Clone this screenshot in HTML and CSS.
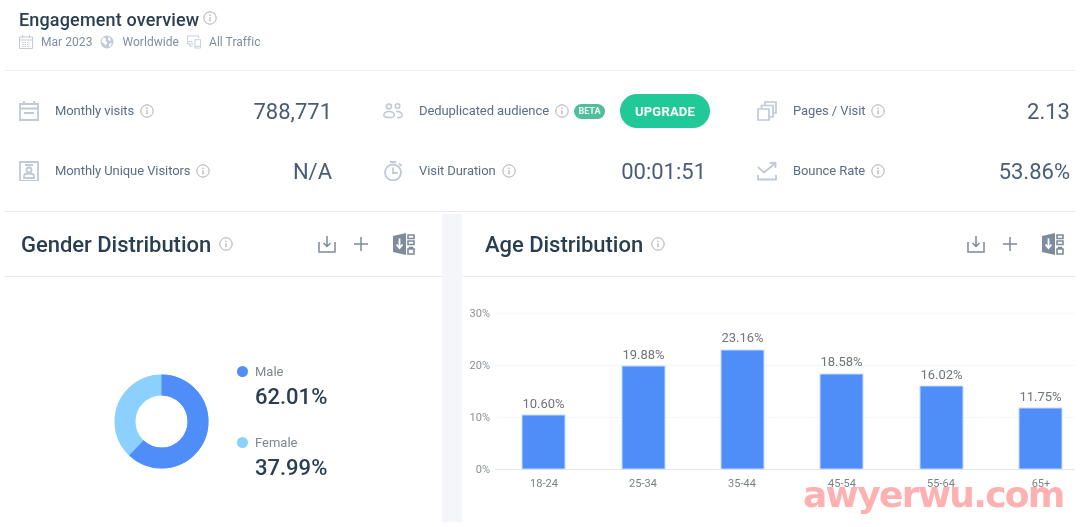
FILE: index.html
```html
<!DOCTYPE html>
<html lang="en">
<head>
    <meta charset="UTF-8">
    <title>Engagement overview</title>
    <link rel="stylesheet" href="styles.css">
</head>
<body>
    <svg class="defs" width="0" height="0">
        <symbol id="info" viewBox="0 0 14 14">
            <circle cx="7" cy="7" r="6.2" fill="none" stroke="currentColor" stroke-width="1"></circle>
            <path d="M7 6.2v4" stroke="currentColor" stroke-width="1.2" fill="none"></path>
            <circle cx="7" cy="4.2" r=".8" fill="currentColor"></circle>
        </symbol>
        <symbol id="download" viewBox="0 0 18 18">
            <path d="M1 7v10h16V7M9 1v10M5.500 8 9 11.500 12.500 8" fill="none" stroke="currentColor" stroke-width="1.500"></path>
        </symbol>
        <symbol id="plus" viewBox="0 0 14 14">
            <path d="M7 0v14M0 7h14" fill="none" stroke="currentColor" stroke-width="1.500"></path>
        </symbol>
        <symbol id="compare" viewBox="0 0 22 22">
            <path d="M0 3 13 0v22L0 19z" fill="currentColor"></path>
            <path d="M6.500 5.500v9M3.500 11.500l3 3.500 3-3.500" fill="none" stroke="#fff" stroke-width="1.800"></path>
            <path d="M15 2h6v3.500h-6zM15 8h6v3.500h-6z" fill="none" stroke="currentColor" stroke-width="1.600"></path>
            <path d="M15 16h6v5h-6zM16.500 16v-1.500h3V16" fill="none" stroke="currentColor" stroke-width="1.600"></path>
        </symbol>
    </svg>

    <div class="overview">
        <div class="title-row">
            <h1>Engagement overview</h1>
            <svg class="info info-title"><use href="#info"></use></svg>
        </div>
        <div class="filters">
            <svg class="filter-icon" viewBox="0 0 14 14" fill="none" stroke="currentColor">
                <path d="M.5 2h13v11.500H.5zM.5 5h13M3.500 0v3M10.500 0v3"></path>
                <path d="M3 7.500h8M3 9.500h8M3 11.500h8" stroke-dasharray="1.500 1"></path>
            </svg>
            <span class="filter-text">Mar 2023</span>
            <svg class="filter-icon" viewBox="0 0 14 14">
                <circle cx="7" cy="7" r="6.500" fill="currentColor"></circle>
                <path d="M3 2.500 6 3.500 5.500 6 7 7.500 6 10.500 3.500 8 1.500 7zM9 1.500 11 5 9.500 6 8 4zM9.500 8.500l2.500-.5-1.500 3.500-1.500.5z" fill="#fff"></path>
            </svg>
            <span class="filter-text">Worldwide</span>
            <svg class="filter-icon" viewBox="0 0 15 14" fill="none" stroke="currentColor">
                <path d="M7 9H.5V.5h12V3M.5 6.500H6M3 9v2.500h3"></path>
                <path d="M8.500 4.500h6v9h-6zM8.500 11.500h6"></path>
            </svg>
            <span class="filter-text">All Traffic</span>
        </div>
    </div>

    <div class="metrics">
        <div class="metric">
            <svg class="metric-icon" viewBox="0 0 20 20" fill="none" stroke="currentColor" stroke-width="1.800">
                <path d="M1 3h18v16H1zM1 7.500h18M5 0v3M15 0v3M5 12h10"></path>
            </svg>
            <span class="label">Monthly visits</span>
            <svg class="info"><use href="#info"></use></svg>
            <span class="value">788,771</span>
        </div>
        <div class="metric">
            <svg class="metric-icon" viewBox="0 0 20 20" fill="none" stroke="currentColor" stroke-width="1.800">
                <path d="M1 1h18v19H1zM6 4h8M5 17h10v-2c0-1.500-2-2.500-5-2.500S5 13.500 5 15z"></path>
                <circle cx="10" cy="9" r="2.500"></circle>
            </svg>
            <span class="label">Monthly Unique Visitors</span>
            <svg class="info"><use href="#info"></use></svg>
            <span class="value">N/A</span>
        </div>
        <div class="metric">
            <svg class="metric-icon" viewBox="0 0 22 18" fill="none" stroke="currentColor" stroke-width="1.700">
                <circle cx="6.500" cy="4" r="2.800"></circle>
                <circle cx="16" cy="3.500" r="2.500"></circle>
                <path d="M1 14c0-3 2.500-4.500 5.500-4.500s6 1.500 6 4.500-11.500 3-11.500 0zM14.500 9.500c3.500-.5 6.500 1.500 6.500 4 0 2-2.500 3-5.500 3"></path>
            </svg>
            <span class="label">Deduplicated audience</span>
            <svg class="info"><use href="#info"></use></svg>
            <span class="beta">BETA</span>
            <button class="upgrade">UPGRADE</button>
        </div>
        <div class="metric">
            <svg class="metric-icon" viewBox="0 0 20 20" fill="none" stroke="currentColor" stroke-width="1.800">
                <circle cx="10" cy="11.500" r="8"></circle>
                <path d="M10 6.500v5.500h4.500M7 1h6M16 2.500l2.500 2.500"></path>
            </svg>
            <span class="label">Visit Duration</span>
            <svg class="info"><use href="#info"></use></svg>
            <span class="value">00:01:51</span>
        </div>
        <div class="metric">
            <svg class="metric-icon" viewBox="0 0 20 20" fill="none" stroke="currentColor" stroke-width="1.700">
                <path d="M8 4V1h11v11h-3"></path>
                <path d="M4.500 8V4.500H16V16h-4"></path>
                <path d="M1 8h11v11H1z"></path>
            </svg>
            <span class="label">Pages / Visit</span>
            <svg class="info"><use href="#info"></use></svg>
            <span class="value">2.13</span>
        </div>
        <div class="metric">
            <svg class="metric-icon" viewBox="0 0 20 20" fill="none" stroke="currentColor" stroke-width="1.800">
                <path d="M1 6 7 11.500 18 2.500M13 2h5.500v5M1 14v4.500h18V14"></path>
            </svg>
            <span class="label">Bounce Rate</span>
            <svg class="info"><use href="#info"></use></svg>
            <span class="value">53.86%</span>
        </div>
    </div>

    <div class="panels">
        <div class="panel panel-gender">
            <div class="panel-header">
                <h2>Gender Distribution</h2>
                <svg class="info info-panel"><use href="#info"></use></svg>
                <div class="tools">
                    <svg class="tool-download"><use href="#download"></use></svg>
                    <svg class="tool-plus"><use href="#plus"></use></svg>
                    <svg class="tool-compare"><use href="#compare"></use></svg>
                </div>
            </div>
            <div class="gender-body">
                <svg class="donut" viewBox="0 0 95 95">
                    <circle cx="47.500" cy="47.500" r="36.500" fill="none" stroke="#8bd0ff" stroke-width="21"></circle>
                    <circle cx="47.500" cy="47.500" r="36.500" fill="none" stroke="#4f8df9" stroke-width="21" stroke-dasharray="142.200 229.300" transform="rotate(-90 47.500 47.500)"></circle>
                </svg>
                <div class="legend">
                    <div class="legend-item">
                        <div class="legend-name"><span class="dot dot-male"></span>Male</div>
                        <div class="legend-value">62.01%</div>
                    </div>
                    <div class="legend-item">
                        <div class="legend-name"><span class="dot dot-female"></span>Female</div>
                        <div class="legend-value">37.99%</div>
                    </div>
                </div>
            </div>
        </div>

        <div class="gutter"></div>

        <div class="panel panel-age">
            <div class="panel-header">
                <h2>Age Distribution</h2>
                <svg class="info info-panel"><use href="#info"></use></svg>
                <div class="tools">
                    <svg class="tool-download"><use href="#download"></use></svg>
                    <svg class="tool-plus"><use href="#plus"></use></svg>
                    <svg class="tool-compare"><use href="#compare"></use></svg>
                </div>
            </div>
            <svg class="chart" viewBox="0 0 613 245" width="613" height="245">
                <g class="grid">
                    <path d="M32 36.500h580M32 88.500h580M32 140.500h580"></path>
                </g>
                <path class="axis" d="M32 192.500h580"></path>
                <g class="y-labels">
                    <text x="27" y="40">30%</text>
                    <text x="27" y="92">20%</text>
                    <text x="27" y="144">10%</text>
                    <text x="27" y="196">0%</text>
                </g>
                <g class="bars">
                    <rect x="59" y="138" width="43" height="54"></rect>
                    <rect x="159" y="89" width="43" height="103"></rect>
                    <rect x="258" y="73" width="43" height="119"></rect>
                    <rect x="357" y="97" width="43" height="95"></rect>
                    <rect x="457" y="109" width="43" height="83"></rect>
                    <rect x="556" y="131" width="43" height="61"></rect>
                </g>
                <g class="bar-labels">
                    <text x="80.500" y="131">10.60%</text>
                    <text x="180.500" y="82">19.88%</text>
                    <text x="279.500" y="65">23.16%</text>
                    <text x="378.500" y="89">18.58%</text>
                    <text x="478.500" y="102">16.02%</text>
                    <text x="577.500" y="124">11.75%</text>
                </g>
                <g class="x-labels">
                    <text x="81" y="210">18-24</text>
                    <text x="180" y="210">25-34</text>
                    <text x="279" y="210">35-44</text>
                    <text x="379" y="210">45-54</text>
                    <text x="478" y="210">55-64</text>
                    <text x="578" y="210">65+</text>
                </g>
            </svg>
        </div>
    </div>

    <div class="watermark">awyerwu.com</div>
</body>
</html>
```

FILE: styles.css
```css
* {
    margin: 0;
    padding: 0;
    box-sizing: border-box;
}

html, body {
    height: 527px;
    overflow: hidden;
}

body {
    position: relative;
    padding: 0 4px;
    background: #fff;
    color: #5b6e84;
    font-family: Roboto, "Liberation Sans", sans-serif;
}

.defs {
    position: absolute;
}

.info {
    width: 14px;
    height: 14px;
    flex: none;
    color: #a9aeb5;
}

/* header */
.overview {
    height: 71px;
    padding: 9px 15px 0;
    border-bottom: 1px solid #eef0f3;
}

.title-row {
    display: flex;
    align-items: flex-start;
    height: 21px;
}

.title-row h1 {
    font-size: 18px;
    line-height: 21px;
    font-weight: 500;
    letter-spacing: .16px;
    color: #2a3e52;
}

.info-title {
    margin-left: 4px;
    margin-top: 2px;
}

.filters {
    display: flex;
    align-items: center;
    margin-top: 4px;
    height: 16px;
    font-size: 12px;
    letter-spacing: .05px;
    color: #7f8ea1;
}

.filter-icon {
    width: 14px;
    height: 14px;
    color: #c3cbd7;
    flex: none;
}

.filter-text {
    margin-left: 8px;
    margin-right: 8px;
}

/* metrics */
.metrics {
    display: grid;
    grid-template-columns: 313px 323px 313px;
    grid-template-rows: 30px 30px;
    grid-auto-flow: column;
    column-gap: 51px;
    row-gap: 30px;
    height: 141px;
    padding: 25px 0 0 15px;
    border-bottom: 1px solid #e8eaed;
}

.metric {
    display: flex;
    align-items: center;
    font-size: 13px;
}

.label {
    margin-bottom: 2px;
    letter-spacing: -.08px;
}

.metric-icon {
    width: 20px;
    height: 20px;
    margin-right: 16px;
    color: #c0c9d8;
    flex: none;
}

.metric .info {
    margin-left: 6px;
}

.value {
    margin-left: auto;
    font-size: 22px;
    color: #4a5d75;
}

.beta {
    margin-left: 5px;
    padding: 0 4.500px;
    border-radius: 8px;
    background: #52bd9a;
    color: #e9f8f3;
    font-size: 9px;
    line-height: 15px;
    font-weight: 700;
}

.upgrade {
    margin-left: auto;
    margin-right: -4px;
    width: 90px;
    height: 34px;
    border: none;
    border-radius: 17px;
    background: #20c997;
    color: #fff;
    font-family: inherit;
    font-size: 13px;
    font-weight: 700;
    letter-spacing: .2px;
}

/* panels */
.panels {
    display: flex;
    height: 310px;
}

.panel-gender {
    width: 438px;
}

.gutter {
    width: 20px;
    margin-top: 2px;
    margin-right: 1px;
    background: #f4f6fa;
    border-radius: 3px 3px 0 0;
}

.panel-age {
    flex: 1;
}

.panel-header {
    display: flex;
    align-items: center;
    height: 65px;
    border-bottom: 1px solid #e6e8eb;
    padding: 0 12px 0 22px;
}

.panel-gender .panel-header {
    padding: 0 27px 0 17px;
}

.panel-header h2 {
    font-size: 22px;
    font-weight: 500;
    letter-spacing: -.03px;
    color: #2a3e52;
}

.info-panel {
    margin-left: 8px;
}

.tools {
    display: flex;
    align-items: center;
    margin-left: auto;
    color: #7d8b9c;
}

.tool-download {
    width: 18px;
    height: 18px;
}

.tool-plus {
    width: 14px;
    height: 14px;
    margin-left: 18px;
}

.tool-compare {
    width: 22px;
    height: 22px;
    margin-left: 25px;
}

/* gender */
.gender-body {
    display: flex;
    align-items: center;
    height: 245px;
    padding: 43px 0 0 110px;
}

.donut {
    width: 95px;
    height: 95px;
    flex: none;
}

.legend {
    margin-left: 28px;
    margin-top: 3px;
}

.legend-item + .legend-item {
    margin-top: 24px;
}

.legend-name {
    display: flex;
    align-items: center;
    font-size: 13px;
    line-height: 16px;
    color: #7f8791;
}

.dot {
    width: 11px;
    height: 11px;
    border-radius: 50%;
    margin-right: 7px;
}

.dot-male {
    background: #4f8df9;
}

.dot-female {
    background: #8bd0ff;
}

.legend-value {
    margin-left: 18px;
    margin-top: 3px;
    font-size: 22px;
    line-height: 28px;
    font-weight: 500;
    color: #2a3e52;
}

/* age chart */
.chart {
    display: block;
}

.grid path {
    stroke: #f5f6f8;
    fill: none;
}

.axis {
    stroke: #e3e6f0;
    fill: none;
}

.chart text {
    font-family: Roboto, "Liberation Sans", sans-serif;
}

.y-labels text {
    font-size: 11px;
    fill: #8a8f97;
    text-anchor: end;
}

.bars rect {
    fill: #4f8df9;
    stroke: #c5dcff;
    stroke-width: 1;
}

.bar-labels text {
    font-size: 13px;
    fill: #6f757c;
    text-anchor: middle;
}

.x-labels text {
    font-size: 11px;
    fill: #7b8087;
    text-anchor: middle;
}

.watermark {
    position: absolute;
    left: 803px;
    top: 475px;
    font-family: "DejaVu Sans", sans-serif;
    font-size: 36px;
    line-height: 40px;
    font-weight: 700;
    letter-spacing: -1.700px;
    color: #ffb0b0;
    mix-blend-mode: multiply;
    white-space: nowrap;
}
```
